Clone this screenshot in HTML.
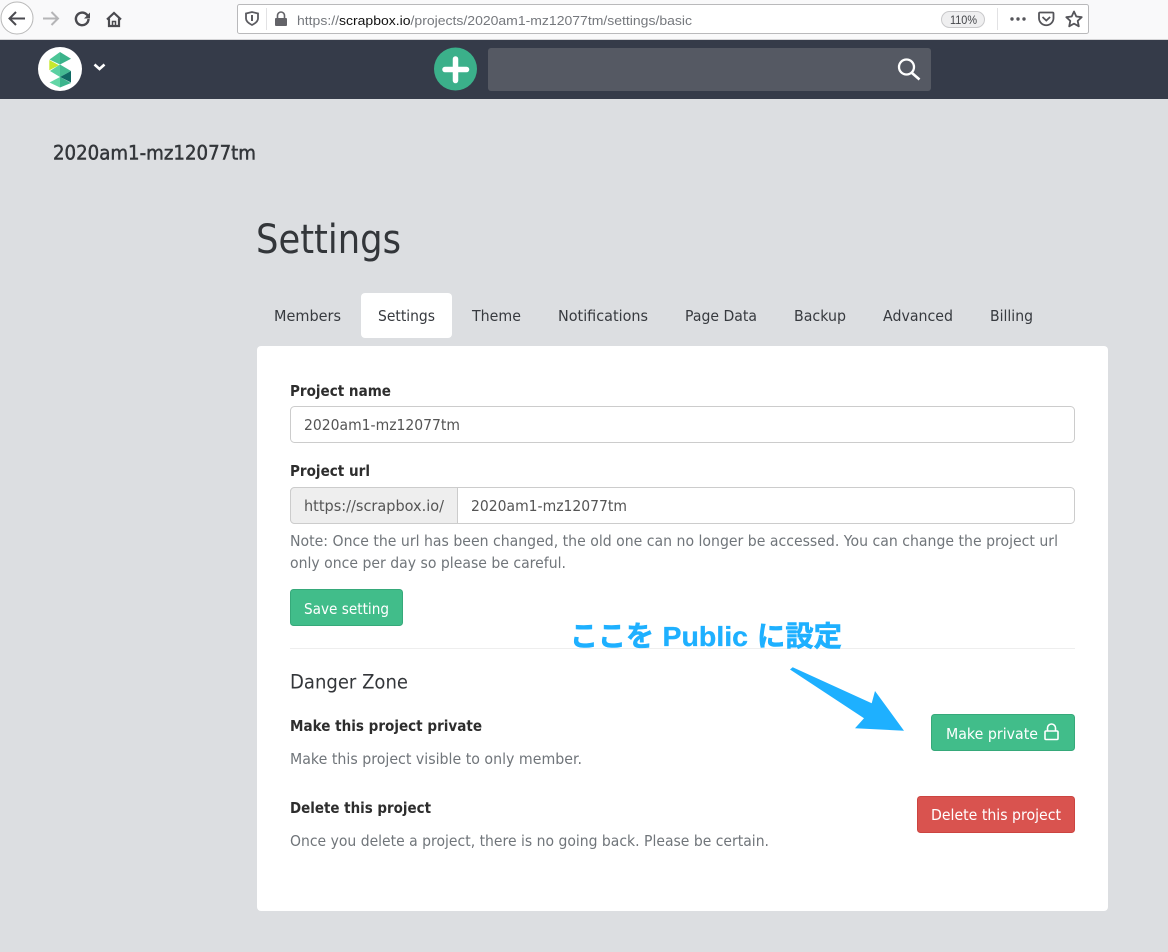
<!DOCTYPE html>
<html lang="en">
<head>
<meta charset="utf-8">
<title>Settings</title>
<style>
html,body{margin:0;padding:0;width:1168px;height:952px;overflow:hidden;background:#dcdee1}
svg{display:block}
text{font-family:"DejaVu Sans","Noto Sans CJK JP",sans-serif;white-space:pre}
.t{font-size:15px;fill:#373a3f}
.g{font-size:15px;fill:#70757a}
.b{font-size:15.500px;font-weight:bold;fill:#2d2d2d}
.i{font-size:15px;fill:#555}
.w{font-size:15px;fill:#fff}
.u{font-size:13px;fill:#75787d;font-family:"Liberation Sans",sans-serif}
.k{font-size:28.500px;font-weight:bold;fill:#1eb0ff;stroke:#1eb0ff;stroke-width:.6px;font-family:"Noto Sans CJK JP",sans-serif}
</style>
</head>
<body>
<svg width="1168" height="952" viewBox="0 0 1168 952" xmlns="http://www.w3.org/2000/svg">
<rect width="1168" height="952" fill="#dcdee1"/>
<!-- browser chrome -->
<rect width="1168" height="39" fill="#f9f9fa"/>
<rect y="39" width="1168" height="1" fill="#d4d4d6"/>
<circle cx="17" cy="18" r="16" fill="#fff" stroke="#b8b8b8"/>
<path d="M25 18.500H10M16 12l-6.500 6.500L16 25" fill="none" stroke="#4a4a4f" stroke-width="2"/>
<path d="M43 18.500H57.500M51.500 12l6.500 6.500L51.500 25" fill="none" stroke="#b5b5b7" stroke-width="2"/>
<path d="M88.500 19a6.300 6.300 0 1 1-2-4.700l2 2" fill="none" stroke="#4a4a4f" stroke-width="2.400"/>
<path d="M90 12.500v6h-6z" fill="#4a4a4f"/>
<path d="M107 19.500l7-6.500 7 6.500" fill="none" stroke="#4a4a4f" stroke-width="2.200"/>
<path d="M109 18.500v7.500h10v-7.500" fill="none" stroke="#4a4a4f" stroke-width="2.200"/>
<path d="M112.500 26v-4.500h3V26" fill="none" stroke="#4a4a4f" stroke-width="1.500"/>
<rect x="237.500" y="4.500" width="851" height="29" rx="2" fill="#fff" stroke="#b9b9bb"/>
<path d="M246 13.500l6-1.500 6 1.500v5c0 3-3 5-6 6.500-3-1.500-6-3.500-6-6.500z" fill="none" stroke="#5b5b60" stroke-width="1.800"/>
<rect x="251" y="15" width="2" height="6" fill="#5b5b60"/>
<rect x="266" y="8" width="1" height="22" fill="#e2e2e4"/>
<rect x="275" y="18" width="12" height="8" rx="1" fill="#636368"/>
<path d="M277.500 18v-2.500a3.500 3.500 0 0 1 7 0V18" fill="none" stroke="#636368" stroke-width="1.600"/>
<text x="297" y="25" class="u" textLength="395" lengthAdjust="spacingAndGlyphs">https://<tspan fill="#111">scrapbox.io</tspan>/projects/2020am1-mz12077tm/settings/basic</text>
<rect x="941.500" y="11.500" width="43" height="16" rx="8" fill="#efeff0" stroke="#c9c9cb"/>
<text x="950" y="24" font-size="11.500" fill="#44464a" style="font-family:'Liberation Sans',sans-serif" textLength="27" lengthAdjust="spacingAndGlyphs">110%</text>
<rect x="997" y="8" width="1" height="22" fill="#e2e2e4"/>
<circle cx="1012" cy="19" r="1.700" fill="#55555a"/><circle cx="1018" cy="19" r="1.700" fill="#55555a"/><circle cx="1024" cy="19" r="1.700" fill="#55555a"/>
<path d="M1040 12.500h12.500a1 1 0 0 1 1 1V18a7.200 7.200 0 0 1-14.500 0v-4.500a1 1 0 0 1 1-1z" fill="none" stroke="#55555a" stroke-width="1.800"/>
<path d="M1042.500 17l3.800 3.500 3.800-3.500" fill="none" stroke="#55555a" stroke-width="1.800"/>
<path d="M1074 11.500l2.300 5 5.400.7-4 3.700 1.100 5.400-4.800-2.700-4.800 2.700 1.100-5.400-4-3.700 5.400-.7z" fill="none" stroke="#55555a" stroke-width="1.800" stroke-linejoin="round"/>
<!-- app nav -->
<rect y="40" width="1168" height="59" fill="#353b49"/>
<circle cx="60" cy="69" r="22" fill="#fff"/>
<path d="M60 52l-10.500 7.500L60 64.500z" fill="#4cc596"/>
<path d="M60 52l11 6.700-11 5.800z" fill="#3bb38a"/>
<path d="M49.300 60v10.300l9.600-5z" fill="#c6e82e"/>
<path d="M50 71l10-6.500V77z" fill="#5bd0a2"/>
<path d="M71 71l-11-6.500V77z" fill="#45bb92"/>
<path d="M71 71v11.500L60 77z" fill="#106a64"/>
<path d="M49.500 82.500L60 77v10.500z" fill="#63d6a6"/>
<path d="M71 83l-11-6v10.500z" fill="#3cb48c"/>
<path d="M94.500 64.500l5 4.500 5-4.500" fill="none" stroke="#fff" stroke-width="2.600"/>
<circle cx="455.500" cy="69" r="21.500" fill="#3bb08a"/>
<path d="M445 69.500h21.500M455.500 59v21.500" stroke="#fff" stroke-width="5.500" stroke-linecap="round"/>
<rect x="488" y="48" width="443" height="43" rx="3" fill="#555963"/>
<circle cx="906.500" cy="67" r="7.500" fill="none" stroke="#fff" stroke-width="2.300"/>
<path d="M912 73l7.500 6.500" stroke="#fff" stroke-width="2.600"/>
<!-- heading -->
<text x="53" y="159.500" font-size="19.500" fill="#33363a" stroke="#33363a" stroke-width=".5" textLength="203" lengthAdjust="spacingAndGlyphs">2020am1-mz12077tm</text>
<text x="256" y="253" font-size="40" fill="#33363a" textLength="145" lengthAdjust="spacingAndGlyphs">Settings</text>
<!-- tabs -->
<rect x="361" y="293" width="91" height="45" rx="4" fill="#fff"/>
<text x="274" y="321" class="t" textLength="67" lengthAdjust="spacingAndGlyphs">Members</text>
<text x="378" y="321" class="t" textLength="57" lengthAdjust="spacingAndGlyphs">Settings</text>
<text x="472" y="321" class="t" textLength="49" lengthAdjust="spacingAndGlyphs">Theme</text>
<text x="558" y="321" class="t" textLength="90" lengthAdjust="spacingAndGlyphs">Notifications</text>
<text x="685" y="321" class="t" textLength="72" lengthAdjust="spacingAndGlyphs">Page Data</text>
<text x="794" y="321" class="t" textLength="52" lengthAdjust="spacingAndGlyphs">Backup</text>
<text x="883" y="321" class="t" textLength="70" lengthAdjust="spacingAndGlyphs">Advanced</text>
<text x="990" y="321" class="t" textLength="43" lengthAdjust="spacingAndGlyphs">Billing</text>
<!-- card -->
<rect x="257" y="346" width="851" height="565" rx="4" fill="#fff"/>
<text x="290" y="396" class="b" textLength="101" lengthAdjust="spacingAndGlyphs">Project name</text>
<rect x="290.500" y="406.500" width="784" height="36" rx="4" fill="#fff" stroke="#ccc"/>
<text x="304" y="430" class="i" textLength="156" lengthAdjust="spacingAndGlyphs">2020am1-mz12077tm</text>
<text x="290" y="476" class="b" textLength="80" lengthAdjust="spacingAndGlyphs">Project url</text>
<rect x="290.500" y="487.500" width="784" height="36" rx="4" fill="#fff" stroke="#ccc"/>
<path d="M457.500 487.500H294.500a4 4 0 0 0-4 4v28a4 4 0 0 0 4 4H457.500z" fill="#eee" stroke="#ccc"/>
<text x="304" y="511" class="i" textLength="140" lengthAdjust="spacingAndGlyphs">https://scrapbox.io/</text>
<text x="471" y="511" class="i" textLength="156" lengthAdjust="spacingAndGlyphs">2020am1-mz12077tm</text>
<text x="290" y="546" class="g" textLength="768" lengthAdjust="spacingAndGlyphs">Note: Once the url has been changed, the old one can no longer be accessed. You can change the project url</text>
<text x="290" y="568" class="g" textLength="276" lengthAdjust="spacingAndGlyphs">only once per day so please be careful.</text>
<rect x="290.500" y="589.500" width="112" height="36" rx="3" fill="#41bd8a" stroke="#36a97a"/>
<text x="304" y="614" class="w" textLength="85" lengthAdjust="spacingAndGlyphs">Save setting</text>
<rect x="290" y="648" width="785" height="1" fill="#eee"/>
<text x="290" y="688.500" font-size="19.500" fill="#33363a" textLength="118" lengthAdjust="spacingAndGlyphs">Danger Zone</text>
<text x="290" y="731" class="b" textLength="192" lengthAdjust="spacingAndGlyphs">Make this project private</text>
<text x="290" y="764" class="g" textLength="292" lengthAdjust="spacingAndGlyphs">Make this project visible to only member.</text>
<rect x="931.500" y="714.500" width="143" height="36" rx="3" fill="#41bd8a" stroke="#36a97a"/>
<text x="946" y="739" class="w" textLength="92" lengthAdjust="spacingAndGlyphs">Make private</text>
<rect x="1045" y="731" width="13" height="8.500" rx="1" fill="none" stroke="#fff" stroke-width="1.600"/>
<path d="M1047.500 731v-3a4 4 0 0 1 8 0v3" fill="none" stroke="#fff" stroke-width="1.600"/>
<text x="290" y="813" class="b" textLength="141" lengthAdjust="spacingAndGlyphs">Delete this project</text>
<text x="290" y="846" class="g" textLength="479" lengthAdjust="spacingAndGlyphs">Once you delete a project, there is no going back. Please be certain.</text>
<rect x="917.500" y="796.500" width="157" height="36" rx="3" fill="#d9534f" stroke="#cc4440"/>
<text x="931" y="820" class="w" textLength="130" lengthAdjust="spacingAndGlyphs">Delete this project</text>
<!-- annotation -->
<text x="570" y="646" class="k" textLength="84" lengthAdjust="spacingAndGlyphs">ここを</text>
<text x="662.500" y="646" font-size="28" font-weight="bold" fill="#1eb0ff" stroke="#1eb0ff" stroke-width=".3" style="font-family:'Liberation Sans',sans-serif" textLength="85.500" lengthAdjust="spacingAndGlyphs">Public</text>
<text x="757" y="646" class="k" textLength="85" lengthAdjust="spacingAndGlyphs">に設定</text>
<path d="M790 669.500l2.700-2.200 79 36 3.300-12.300 29 39.700-49-2.400 9-10z" fill="#1eb0ff"/>
</svg>
</body>
</html>
